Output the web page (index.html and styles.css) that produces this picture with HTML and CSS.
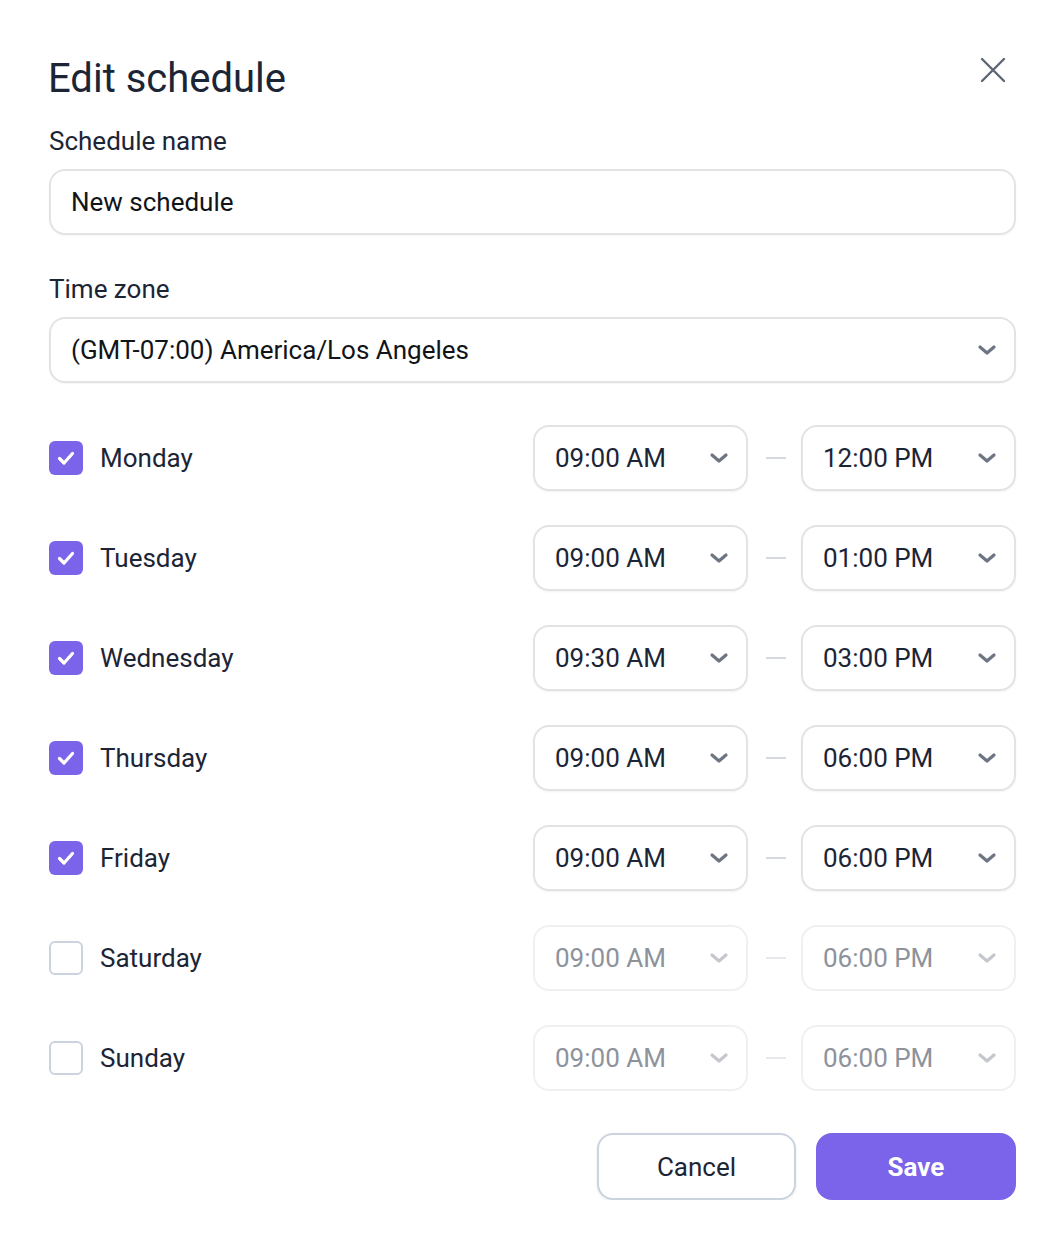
FILE: index.html
```html
<!DOCTYPE html>
<html>
<head>
<meta charset="utf-8">
<link rel="stylesheet" href="styles.css">
</head>
<body>
<div class="dialog">
  <div class="header">
    <h1 class="title">Edit schedule</h1>
    <button class="close" aria-label="Close">
      <svg width="26" height="26" viewBox="0 0 26 26"><path d="M2 2L24 24M24 2L2 24" stroke="#5f6775" stroke-width="2.4" stroke-linecap="round"/></svg>
    </button>
  </div>

  <label class="label">Schedule name</label>
  <div class="field"><span class="value">New schedule</span></div>

  <label class="label label-tz">Time zone</label>
  <div class="field select"><span class="value">(GMT-07:00) America/Los Angeles</span><span class="chev"><svg width="20" height="12" viewBox="0 0 20 12"><path d="M3 3L10 9L17 3" fill="none" stroke="currentColor" stroke-width="3.2" stroke-linecap="round" stroke-linejoin="round"/></svg></span></div>

  <div class="days">
    <div class="row"><span class="cb on"><svg width="34" height="34" viewBox="0 0 34 34"><path d="M10.5 17.5L15 22L23.5 12.5" fill="none" stroke="#fff" stroke-width="3.2" stroke-linecap="round" stroke-linejoin="round"/></svg></span><span class="day">Monday</span>
      <div class="time"><span>09:00 AM</span><span class="chev"><svg width="20" height="12" viewBox="0 0 20 12"><path d="M3 3L10 9L17 3" fill="none" stroke="currentColor" stroke-width="3.2" stroke-linecap="round" stroke-linejoin="round"/></svg></span></div><span class="dash"></span>
      <div class="time"><span>12:00 PM</span><span class="chev"><svg width="20" height="12" viewBox="0 0 20 12"><path d="M3 3L10 9L17 3" fill="none" stroke="currentColor" stroke-width="3.2" stroke-linecap="round" stroke-linejoin="round"/></svg></span></div></div>
    <div class="row"><span class="cb on"><svg width="34" height="34" viewBox="0 0 34 34"><path d="M10.5 17.5L15 22L23.5 12.5" fill="none" stroke="#fff" stroke-width="3.2" stroke-linecap="round" stroke-linejoin="round"/></svg></span><span class="day">Tuesday</span>
      <div class="time"><span>09:00 AM</span><span class="chev"><svg width="20" height="12" viewBox="0 0 20 12"><path d="M3 3L10 9L17 3" fill="none" stroke="currentColor" stroke-width="3.2" stroke-linecap="round" stroke-linejoin="round"/></svg></span></div><span class="dash"></span>
      <div class="time"><span>01:00 PM</span><span class="chev"><svg width="20" height="12" viewBox="0 0 20 12"><path d="M3 3L10 9L17 3" fill="none" stroke="currentColor" stroke-width="3.2" stroke-linecap="round" stroke-linejoin="round"/></svg></span></div></div>
    <div class="row"><span class="cb on"><svg width="34" height="34" viewBox="0 0 34 34"><path d="M10.5 17.5L15 22L23.5 12.5" fill="none" stroke="#fff" stroke-width="3.2" stroke-linecap="round" stroke-linejoin="round"/></svg></span><span class="day">Wednesday</span>
      <div class="time"><span>09:30 AM</span><span class="chev"><svg width="20" height="12" viewBox="0 0 20 12"><path d="M3 3L10 9L17 3" fill="none" stroke="currentColor" stroke-width="3.2" stroke-linecap="round" stroke-linejoin="round"/></svg></span></div><span class="dash"></span>
      <div class="time"><span>03:00 PM</span><span class="chev"><svg width="20" height="12" viewBox="0 0 20 12"><path d="M3 3L10 9L17 3" fill="none" stroke="currentColor" stroke-width="3.2" stroke-linecap="round" stroke-linejoin="round"/></svg></span></div></div>
    <div class="row"><span class="cb on"><svg width="34" height="34" viewBox="0 0 34 34"><path d="M10.5 17.5L15 22L23.5 12.5" fill="none" stroke="#fff" stroke-width="3.2" stroke-linecap="round" stroke-linejoin="round"/></svg></span><span class="day">Thursday</span>
      <div class="time"><span>09:00 AM</span><span class="chev"><svg width="20" height="12" viewBox="0 0 20 12"><path d="M3 3L10 9L17 3" fill="none" stroke="currentColor" stroke-width="3.2" stroke-linecap="round" stroke-linejoin="round"/></svg></span></div><span class="dash"></span>
      <div class="time"><span>06:00 PM</span><span class="chev"><svg width="20" height="12" viewBox="0 0 20 12"><path d="M3 3L10 9L17 3" fill="none" stroke="currentColor" stroke-width="3.2" stroke-linecap="round" stroke-linejoin="round"/></svg></span></div></div>
    <div class="row"><span class="cb on"><svg width="34" height="34" viewBox="0 0 34 34"><path d="M10.5 17.5L15 22L23.5 12.5" fill="none" stroke="#fff" stroke-width="3.2" stroke-linecap="round" stroke-linejoin="round"/></svg></span><span class="day">Friday</span>
      <div class="time"><span>09:00 AM</span><span class="chev"><svg width="20" height="12" viewBox="0 0 20 12"><path d="M3 3L10 9L17 3" fill="none" stroke="currentColor" stroke-width="3.2" stroke-linecap="round" stroke-linejoin="round"/></svg></span></div><span class="dash"></span>
      <div class="time"><span>06:00 PM</span><span class="chev"><svg width="20" height="12" viewBox="0 0 20 12"><path d="M3 3L10 9L17 3" fill="none" stroke="currentColor" stroke-width="3.2" stroke-linecap="round" stroke-linejoin="round"/></svg></span></div></div>
    <div class="row off"><span class="cb"></span><span class="day">Saturday</span>
      <div class="time"><span>09:00 AM</span><span class="chev"><svg width="20" height="12" viewBox="0 0 20 12"><path d="M3 3L10 9L17 3" fill="none" stroke="currentColor" stroke-width="3.2" stroke-linecap="round" stroke-linejoin="round"/></svg></span></div><span class="dash"></span>
      <div class="time"><span>06:00 PM</span><span class="chev"><svg width="20" height="12" viewBox="0 0 20 12"><path d="M3 3L10 9L17 3" fill="none" stroke="currentColor" stroke-width="3.2" stroke-linecap="round" stroke-linejoin="round"/></svg></span></div></div>
    <div class="row off"><span class="cb"></span><span class="day">Sunday</span>
      <div class="time"><span>09:00 AM</span><span class="chev"><svg width="20" height="12" viewBox="0 0 20 12"><path d="M3 3L10 9L17 3" fill="none" stroke="currentColor" stroke-width="3.2" stroke-linecap="round" stroke-linejoin="round"/></svg></span></div><span class="dash"></span>
      <div class="time"><span>06:00 PM</span><span class="chev"><svg width="20" height="12" viewBox="0 0 20 12"><path d="M3 3L10 9L17 3" fill="none" stroke="currentColor" stroke-width="3.2" stroke-linecap="round" stroke-linejoin="round"/></svg></span></div></div>
  </div>

  <div class="actions">
    <button class="btn cancel">Cancel</button>
    <button class="btn save">Save</button>
  </div>
</div>
</body>
</html>
```
FILE: styles.css
```css
* { box-sizing: border-box; }
html, body { margin: 0; background: #fff; }
body { font-family: Roboto, "Noto Sans", sans-serif; color: #1c2536; }

.dialog { padding: 52px 46px 0 48px; width: 1062px; }

.header { display: flex; justify-content: space-between; align-items: flex-start; }
.title { margin: 0; font-size: 40px; font-weight: 400; line-height: 54px; color: #1c2536; }
.close { background: none; border: 0; padding: 0; margin: 5px 10px 0 0; width: 26px; height: 26px; display: flex; }

.label { display: block; font-size: 26px; line-height: 32px; margin-top: 19px; margin-left: 1px; color: #1c2536; }
.label-tz { margin-top: 38px; }

.field {
  margin-top: 12px; margin-left: 1px; height: 66px; border: 2px solid #e3e3e5; border-radius: 16px;
  display: flex; align-items: center; padding: 0 17px 0 20px;
  box-shadow: 0 1px 2px rgba(0,0,0,0.04);
  font-size: 26px; color: #111418;
}
.field .value { flex: 1; }
.chev { color: #6e7582; display: flex; align-items: center; }

.days { margin-top: 42px; display: flex; flex-direction: column; gap: 34px; }
.row { display: flex; align-items: center; height: 66px; }
.cb { width: 34px; height: 34px; margin-left: 1px; border-radius: 6px; border: 2px solid #cbd3df; flex: none; display: flex; align-items: center; justify-content: center; }
.cb.on { background: #7b64ea; border: 0; }
.day { flex: 1; margin-left: 17px; font-size: 26px; color: #1c2536; }

.time {
  width: 215px; height: 66px; border: 2px solid #e3e3e5; border-radius: 16px;
  display: flex; align-items: center; justify-content: space-between;
  padding: 0 17px 0 20px; font-size: 26px; color: #1c2536;
  box-shadow: 0 1px 2px rgba(0,0,0,0.05);
}
.dash { width: 20px; height: 2px; background: #d6d9de; margin: 0 15px 0 18px; }

.row.off .time { border-color: #f0f0f2; color: #8d929b; box-shadow: none; }
.row.off .chev { color: #c4c7cd; }
.row.off .dash { background: #e6e8eb; }

.actions { margin-top: 42px; display: flex; justify-content: flex-end; gap: 20px; }
.btn { height: 67px; border-radius: 16px; font-family: Roboto, sans-serif; font-size: 26px; }
.cancel { width: 199px; background: #fff; border: 2px solid #cbd3df; color: #1c2536; box-shadow: 0 1px 3px rgba(0,0,0,0.08); }
.save { width: 200px; background: #7b64ea; border: 0; color: #fff; font-weight: 700; }
```
